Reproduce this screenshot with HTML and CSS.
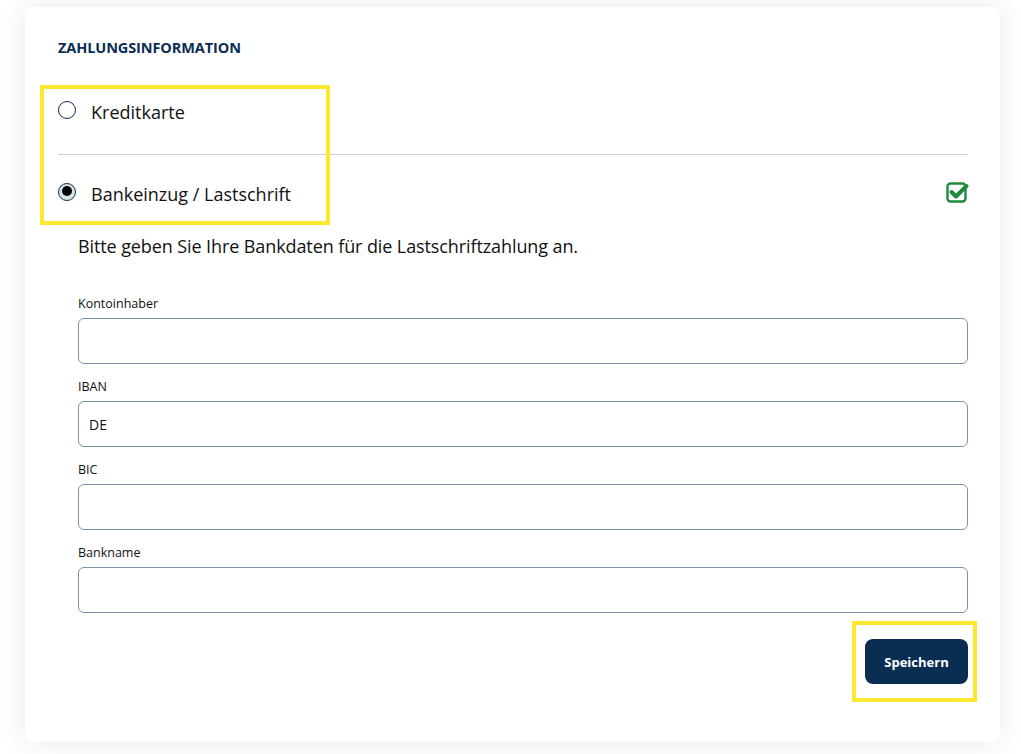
FILE: index.html
```html
<!DOCTYPE html>
<html lang="de">
<head>
    <meta charset="UTF-8">
    <meta name="viewport" content="width=device-width, initial-scale=1.0">
    <title>Zahlungsinformation</title>
    <link rel="stylesheet" href="styles.css">
</head>
<body>

    <!-- Payment card -->
    <div class="card">
        <h2 class="card-title">ZAHLUNGSINFORMATION</h2>

        <div class="options">
            <label class="option">
                <span class="radio"></span>
                <span class="option-label">Kreditkarte</span>
            </label>
            <div class="divider"></div>
            <label class="option">
                <span class="radio checked"></span>
                <span class="option-label">Bankeinzug / Lastschrift</span>
                <svg class="check-icon" width="24" height="22" viewBox="0 0 24 22">
                    <rect x="1.5" y="2.5" width="18" height="18" rx="3" fill="none" stroke="#1f8a3c" stroke-width="2.4"/>
                    <path d="M5.5 11 L10 15.5 L20.5 5" fill="none" stroke="#1f8a3c" stroke-width="4" stroke-linecap="round" stroke-linejoin="round"/>
                </svg>
            </label>
            <div class="highlight"></div>
        </div>

        <!-- Bank data -->
        <div class="bank-form">
            <p class="intro">Bitte geben Sie Ihre Bankdaten für die Lastschriftzahlung an.</p>

            <div class="field">
                <label>Kontoinhaber</label>
                <input type="text">
            </div>
            <div class="field">
                <label>IBAN</label>
                <input type="text" value="DE">
            </div>
            <div class="field">
                <label>BIC</label>
                <input type="text">
            </div>
            <div class="field">
                <label>Bankname</label>
                <input type="text">
            </div>

            <div class="actions">
                <button class="save-btn">Speichern</button>
                <div class="highlight btn-highlight"></div>
            </div>
        </div>
    </div>

</body>
</html>
```

FILE: styles.css
```css
/* Global Styles */
* {
    margin: 0;
    padding: 0;
    box-sizing: border-box;
    font-family: "Open Sans", "Noto Sans", Arial, sans-serif;
}

body {
    background-color: #ffffff;
    padding: 7px 21px 12px 25px;
}

/* Card */
.card {
    background: white;
    border-radius: 9px;
    box-shadow: 0 0 28px rgba(30, 40, 60, 0.1);
    padding: 33px 32px 30px 33px;
    height: 735px;
}

.card-title {
    color: #0a2d52;
    font-size: 14.5px;
    font-weight: 700;
    letter-spacing: -0.1px;
    line-height: 16px;
}

/* Payment options */
.options {
    position: relative;
    margin-top: 38px;
}

.option {
    display: flex;
    align-items: center;
    height: 35px;
}

.option-label {
    font-size: 18px;
    color: #111;
    margin-left: 15px;
}

.radio {
    width: 18px;
    height: 18px;
    border-radius: 50%;
    border: 1.5px solid #0a2d52;
    background: white;
    position: relative;
    top: -2px;
}

.radio.checked {
    background: #d5e5ea;
    border-color: #1b3045;
}

.radio.checked::before {
    content: "";
    position: absolute;
    top: 2.5px;
    left: 2.5px;
    width: 10px;
    height: 10px;
    border-radius: 50%;
    background: #000;
}

.check-icon {
    margin-left: auto;
    margin-right: -2px;
    margin-top: -4px;
}

.divider {
    height: 1px;
    background: #cfcfcf;
    margin: 25px 0 21px 0;
}

/* Yellow annotation boxes */
.highlight {
    position: absolute;
    border: 4px solid #ffe930;
    pointer-events: none;
}

.options .highlight {
    top: -9px;
    left: -18px;
    width: 290px;
    height: 140px;
}

/* Bank form */
.bank-form {
    padding-left: 20px;
    margin-top: 23px;
}

.intro {
    font-size: 18px;
    color: #111;
    letter-spacing: -0.1px;
    margin-bottom: 37px;
}

.field {
    margin-bottom: 14px;
}

.field label {
    display: block;
    font-size: 12.5px;
    font-weight: 500;
    color: #111;
    margin-bottom: 6px;
}

.field input {
    width: 100%;
    height: 46px;
    border: 1px solid #7c91a6;
    border-radius: 6px;
    padding: 0 10px;
    font-size: 14px;
    color: #111;
    outline: none;
}

/* Save button */
.actions {
    position: relative;
    display: flex;
    justify-content: flex-end;
    margin-top: 26px;
}

.save-btn {
    background: #0a2d52;
    color: white;
    border: none;
    border-radius: 8px;
    width: 103px;
    height: 45px;
    font-size: 13px;
    font-weight: 700;
    cursor: pointer;
}

.btn-highlight {
    top: -18px;
    right: -9px;
    width: 125px;
    height: 81px;
}
```
